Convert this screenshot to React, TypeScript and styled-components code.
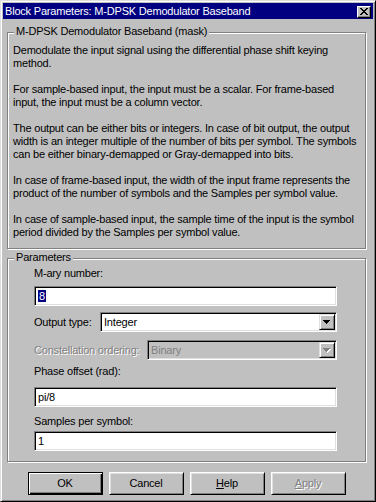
import React from "react";
import styled, { createGlobalStyle } from "styled-components";

const Global = createGlobalStyle`
  html, body { margin: 0; padding: 0; background: #c0c0c0; }
  body {
    font-family: "Liberation Sans", Arial, sans-serif;
    font-size: 11px;
    letter-spacing: -0.2px;
    color: #000;
  }
  * { box-sizing: border-box; }
`;

const Window = styled.div`
  width: 376px;
  height: 502px;
  background: #c0c0c0;
  border: 1px solid;
  border-color: #dfdfdf #000 #000 #dfdfdf;
  box-shadow: inset 1px 1px 0 #fff, inset -1px -1px 0 #808080;
  padding: 2px;
  display: flex;
  flex-direction: column;
`;

const TitleBar = styled.div`
  height: 16px;
  flex: none;
  background: #000080;
  color: #fff;
  display: flex;
  align-items: center;
  justify-content: space-between;
  padding: 0 2px 0 2px;
  line-height: 13px;
`;

const TitleText = styled.span`
  white-space: nowrap;
`;

const CloseBtn = styled.div`
  width: 14px;
  height: 12px;
  background: #c0c0c0;
  border: 1px solid;
  border-color: #fff #000 #000 #fff;
  box-shadow: inset -1px -1px 0 #808080;
  display: flex;
  align-items: center;
  justify-content: center;
  margin-top: 1px;
`;

const Body = styled.div`
  display: flex;
  flex-direction: column;
  padding: 0 7px 0 4px;
`;

const Group = styled.div<{ $mt: number }>`
  position: relative;
  flex: none;
  margin-top: ${(p) => p.$mt}px;
  border: 1px solid #808080;
  box-shadow: 1px 1px 0 #fff, inset 1px 1px 0 #fff;
`;

const GroupLabel = styled.span`
  position: absolute;
  top: -8px;
  left: 6px;
  padding: 0 2px;
  background: #c0c0c0;
  line-height: 13px;
  white-space: nowrap;
`;

const Description = styled.div`
  padding: 11px 4px 9px 5px;
  line-height: 13px;
`;

const Para = styled.p`
  margin: 0 0 13px 0;
  white-space: nowrap;
  &:last-child { margin-bottom: 0; }
`;

const Line = styled.span`
  display: block;
`;

const Params = styled.div`
  padding: 8px 28px 10px 26px;
  display: flex;
  flex-direction: column;
`;

const Label = styled.div<{ $mt?: number; $disabled?: boolean }>`
  flex: none;
  margin-top: ${(p) => p.$mt ?? 0}px;
  line-height: 13px;
  white-space: nowrap;
  color: ${(p) => (p.$disabled ? "#808080" : "#000")};
  text-shadow: ${(p) => (p.$disabled ? "1px 1px 0 #fff" : "none")};
`;

const Field = styled.div<{ $mt?: number; $disabled?: boolean }>`
  flex: none;
  margin-top: ${(p) => p.$mt ?? 0}px;
  height: 20px;
  background: ${(p) => (p.$disabled ? "#c0c0c0" : "#fff")};
  border: 1px solid;
  border-color: #808080 #fff #fff #808080;
  box-shadow: inset 1px 1px 0 #000, inset -1px -1px 0 #dfdfdf;
  display: flex;
  align-items: center;
  padding: 0 1px 0 2px;
  line-height: 13px;
  white-space: nowrap;
`;

const FieldText = styled.span<{ $disabled?: boolean }>`
  padding-left: 1px;
  flex: 1;
  color: ${(p) => (p.$disabled ? "#808080" : "#000")};
`;

const Selected = styled.span`
  background: #000080;
  color: #fff;
  padding: 0 1px;
`;

const Row = styled.div<{ $mt: number; $labelWidth: number }>`
  flex: none;
  margin-top: ${(p) => p.$mt}px;
  display: grid;
  grid-template-columns: ${(p) => p.$labelWidth}px 1fr;
  align-items: center;
`;

const DropBtn = styled.div`
  width: 16px;
  height: 16px;
  background: #c0c0c0;
  border: 1px solid;
  border-color: #dfdfdf #000 #000 #dfdfdf;
  box-shadow: inset 1px 1px 0 #fff, inset -1px -1px 0 #808080;
  display: flex;
  align-items: center;
  justify-content: center;
`;

const Buttons = styled.div`
  margin-top: 10px;
  display: flex;
  justify-content: center;
  gap: 6px;
`;

const Button = styled.div<{ $default?: boolean; $disabled?: boolean }>`
  width: 75px;
  height: 23px;
  display: flex;
  align-items: center;
  justify-content: center;
  background: #c0c0c0;
  line-height: 13px;
  color: ${(p) => (p.$disabled ? "#808080" : "#000")};
  text-shadow: ${(p) => (p.$disabled ? "1px 1px 0 #fff" : "none")};
  border: 1px solid;
  border-color: ${(p) => (p.$default ? "#000" : "#fff #000 #000 #fff")};
  box-shadow: ${(p) =>
    p.$default
      ? "inset 1px 1px 0 #fff, inset -1px -1px 0 #000, inset -2px -2px 0 #808080"
      : "inset 1px 1px 0 #dfdfdf, inset -1px -1px 0 #808080"};
`;

const CloseIcon = () => (
  <svg width="8" height="7" viewBox="0 0 8 7" shapeRendering="crispEdges">
    <path
      fill="#000"
      d="M0 0h2v1H0zM6 0h2v1H6zM1 1h2v1H1zM5 1h2v1H5zM2 2h4v1H2zM3 3h2v1H3zM2 4h4v1H2zM1 5h2v1H1zM5 5h2v1H5zM0 6h2v1H0zM6 6h2v1H6z"
    />
  </svg>
);

const Arrow = ({ disabled }: { disabled?: boolean }) => (
  <svg width="8" height="5" viewBox="0 0 8 5" shapeRendering="crispEdges">
    {disabled && (
      <path fill="#fff" d="M1 1h7v1H1zM2 2h5v1H2zM3 3h3v1H3zM4 4h1v1H4z" />
    )}
    <path
      fill={disabled ? "#808080" : "#000"}
      d="M0 0h7v1H0zM1 1h5v1H1zM2 2h3v1H2zM3 3h1v1H3z"
    />
  </svg>
);

const paragraphs = [
  [
    "Demodulate the input signal using the differential phase shift keying",
    "method.",
  ],
  [
    "For sample-based input, the input must be a scalar. For frame-based",
    "input, the input must be a column vector.",
  ],
  [
    "The output can be either bits or integers. In case of bit output, the output",
    "width is an integer multiple of the number of bits per symbol. The symbols",
    "can be either binary-demapped or Gray-demapped into bits.",
  ],
  [
    "In case of frame-based input, the width of the input frame represents the",
    "product of the number of symbols and the Samples per symbol value.",
  ],
  [
    "In case of sample-based input, the sample time of the input is the symbol",
    "period divided by the Samples per symbol value.",
  ],
];

export default function App() {
  return (
    <>
      <Global />
      <Window>
        <TitleBar>
          <TitleText>Block Parameters: M-DPSK Demodulator Baseband</TitleText>
          <CloseBtn>
            <CloseIcon />
          </CloseBtn>
        </TitleBar>
        <Body>
          <Group $mt={13}>
            <GroupLabel>M-DPSK Demodulator Baseband (mask)</GroupLabel>
            <Description>
              {paragraphs.map((lines, i) => (
                <Para key={i}>
                  {lines.map((l, j) => (
                    <Line key={j}>{l}</Line>
                  ))}
                </Para>
              ))}
            </Description>
          </Group>
          <Group $mt={9}>
            <GroupLabel>Parameters</GroupLabel>
            <Params>
              <Label>M-ary number:</Label>
              <Field $mt={6}>
                <FieldText>
                  <Selected>8</Selected>
                </FieldText>
              </Field>
              <Row $mt={6} $labelWidth={66}>
                <Label>Output type:</Label>
                <Field>
                  <FieldText>Integer</FieldText>
                  <DropBtn>
                    <Arrow />
                  </DropBtn>
                </Field>
              </Row>
              <Row $mt={8} $labelWidth={113}>
                <Label $disabled>Constellation ordering:</Label>
                <Field $disabled>
                  <FieldText $disabled>Binary</FieldText>
                  <DropBtn>
                    <Arrow disabled />
                  </DropBtn>
                </Field>
              </Row>
              <Label $mt={5}>Phase offset (rad):</Label>
              <Field $mt={9}>
                <FieldText>pi/8</FieldText>
              </Field>
              <Label $mt={8}>Samples per symbol:</Label>
              <Field $mt={3}>
                <FieldText>1</FieldText>
              </Field>
            </Params>
          </Group>
          <Buttons>
            <Button $default>OK</Button>
            <Button>Cancel</Button>
            <Button>
              <span>
                <u>H</u>elp
              </span>
            </Button>
            <Button $disabled>
              <span>
                <u>A</u>pply
              </span>
            </Button>
          </Buttons>
        </Body>
      </Window>
    </>
  );
}
